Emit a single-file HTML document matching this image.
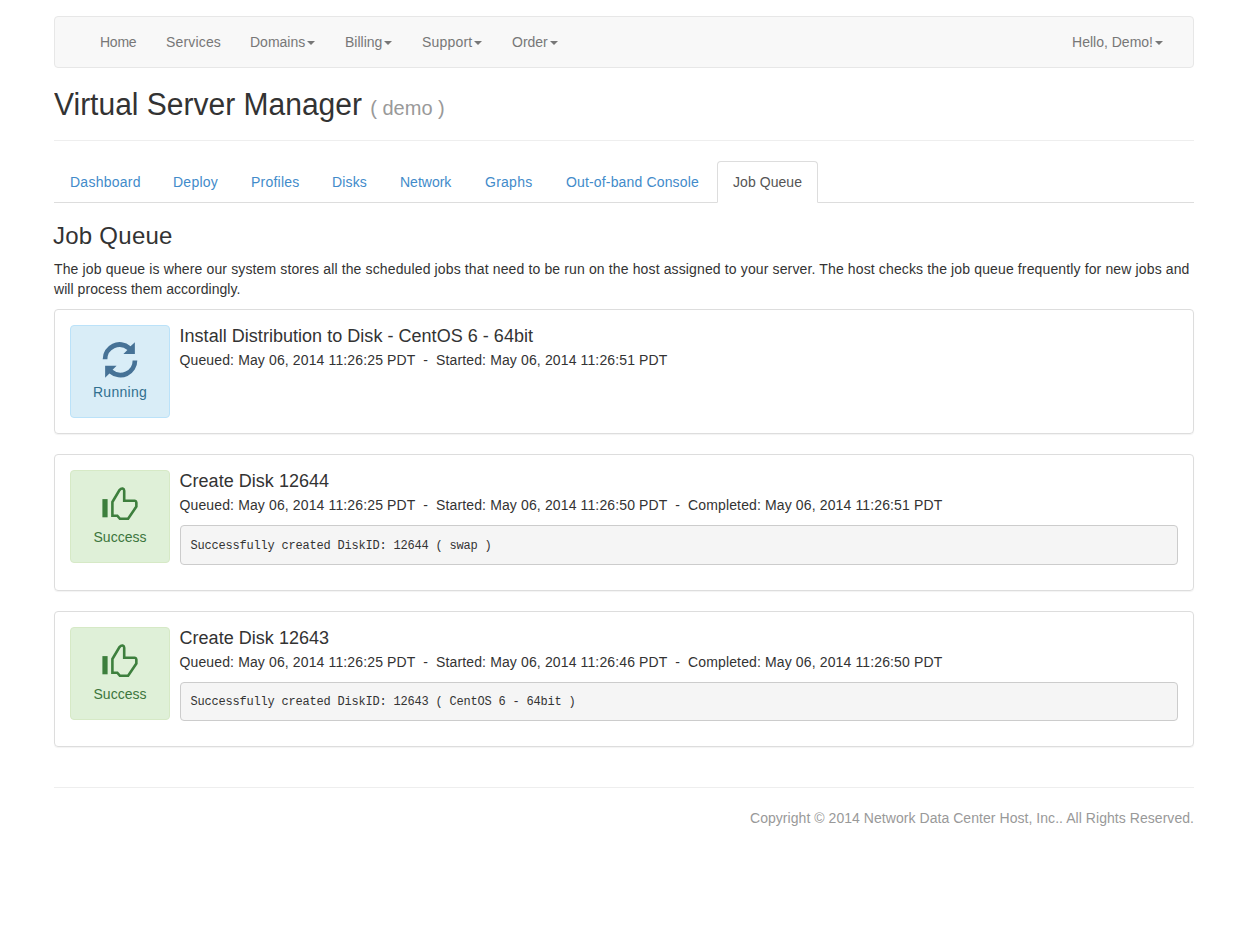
<!DOCTYPE html>
<html><head><meta charset="utf-8"><title>Virtual Server Manager</title>
<style>
*{box-sizing:border-box;}
html,body{margin:0;padding:0;background:#fff;}
body{font-family:"Liberation Sans",sans-serif;font-size:14px;line-height:20px;color:#333;width:1257px;height:933px;overflow:hidden;position:relative;}
.container{position:absolute;left:54px;top:0;width:1140px;}
.navbar{margin-top:16px;height:52px;background:#f8f8f8;border:1px solid #e7e7e7;border-radius:4px;position:relative;}
.nav a{position:absolute;top:15px;line-height:20px;color:#777;text-decoration:none;white-space:nowrap;}
.navr{position:absolute;top:0;right:15px;}
.navr a{display:block;padding:15px;line-height:20px;color:#777;}
.caret{display:inline-block;width:0;height:0;margin-left:2px;vertical-align:middle;border-top:4px solid #777;border-left:4px solid transparent;border-right:4px solid transparent;position:relative;top:0px;}
.page-header{margin:20px 0 20px;padding-bottom:9px;border-bottom:1px solid #eee;}
h1{font-size:30px;font-weight:500;line-height:33px;margin:0 0 10px;color:#333;}
.t1{display:inline-block;transform:scaleY(1.055);transform-origin:0 27px;}
h1 small{font-size:20px;color:#999;font-weight:normal;line-height:1;}
.tabs{height:42px;border-bottom:1px solid #ddd;position:relative;margin:0;padding:0;list-style:none;}
.tabs li{float:left;margin-right:2px;margin-bottom:-1px;}
.tabs a{display:block;padding:10px 0 10px 15px;white-space:nowrap;line-height:20px;border:1px solid transparent;border-radius:4px 4px 0 0;color:#428bca;text-decoration:none;}
.tabs li.active a{color:#555;background:#fff;border-color:#ddd #ddd transparent;}
h3{font-size:24px;font-weight:500;line-height:26.4px;margin:20px 0 10px;letter-spacing:0.25px;position:relative;left:-1px;}
p{margin:0 0 10px;}
.intro{white-space:nowrap;letter-spacing:0.133px;}
.intro span{letter-spacing:0.05px;}
.meta{letter-spacing:0.13px;white-space:nowrap;position:relative;left:-0.5px;}
.panel{border:1px solid #ddd;border-radius:4px;margin-bottom:20px;box-shadow:0 1px 1px rgba(0,0,0,.05);position:relative;}
.pbody{padding:15px;position:relative;}
.status{position:absolute;left:15px;top:15px;width:100px;height:93px;border:1px solid;border-radius:4px;text-align:center;}
.info{background:#d9edf7;border-color:#bbe2f9;color:#31708f;}
.succ{background:#dff0d8;border-color:#d6e9c6;color:#3c763d;}
.status svg{position:absolute;left:0;top:0;}
.status span{position:absolute;left:0;right:0;top:56px;line-height:20px;}
.info span{letter-spacing:0.28px;}
.job{margin-left:110px;}
h4{font-size:18px;font-weight:500;line-height:19.8px;margin:2px 0 3px;position:relative;left:-0.5px;letter-spacing:0.03px;}
.job p{margin:0 0 10px;}
pre{margin:0 0 10px;padding:10.5px 9.5px 8.5px;letter-spacing:-0.2px;font-family:"Liberation Mono",monospace;font-size:12px;line-height:18.57px;background:#f5f5f5;border:1px solid #ccc;border-radius:4px;color:#333;}
.minh{min-height:91px;}
hr{margin:40px 0 20px;border:0;border-top:1px solid #eee;height:0;}
.footer{text-align:right;color:#999;letter-spacing:0.05px;margin-right:-0.05px;}
</style></head><body>
<div class="container">
<div class="navbar">
 <div class="nav"><a style="left:45px;letter-spacing:-0.25px">Home</a><a style="left:111px;letter-spacing:0.17px">Services</a><a style="left:195px">Domains<span class="caret"></span></a><a style="left:290px">Billing<span class="caret"></span></a><a style="left:367px;letter-spacing:0.2px">Support<span class="caret"></span></a><a style="left:457px">Order<span class="caret"></span></a></div>
 <div class="navr"><a>Hello, Demo!<span class="caret"></span></a></div>
</div>
<div class="page-header"><h1><span class="t1">Virtual Server Manager</span> <small>( demo )</small></h1></div>
<ul class="tabs">
 <li><a style="width:101px;letter-spacing:0.25px">Dashboard</a></li><li><a style="width:76px;letter-spacing:0.24px">Deploy</a></li><li><a style="width:79px;letter-spacing:0.23px">Profiles</a></li><li><a style="width:66px;letter-spacing:0.15px">Disks</a></li><li><a style="width:83px">Network</a></li><li><a style="width:79px;letter-spacing:0.26px">Graphs</a></li><li><a style="width:165px;letter-spacing:0.155px">Out-of-band Console</a></li><li class="active"><a style="width:101px;letter-spacing:0.06px">Job Queue</a></li>
</ul>
<h3>Job Queue</h3>
<p class="intro">The job queue is where our system stores all the scheduled jobs that need to be run on the host assigned to your server. The host checks the job queue frequently for new jobs and<br><span>will process them accordingly.</span></p>

<div class="panel"><div class="pbody">
 <div class="status info">
  <svg width="100" height="93" viewBox="71 325.6 100 93"><path fill="#467296" d="M102.7 358.86A16.88 16.88 0 0 1 130.57 345.8L134.87 341.8L134.87 353.6L123.4 353.6L127.4 349.5A12.2 12.2 0 0 0 107.38 358.86Z M137.3 359.98A16.88 16.88 0 0 1 109.43 373.04L105.13 377.4L105.13 365.24L116.6 365.24L112.6 369.34A12.2 12.2 0 0 0 132.62 359.98Z"/></svg>
  <span>Running</span>
 </div>
 <div class="job minh">
  <h4>Install Distribution to Disk - CentOS 6 - 64bit</h4>
  <p class="meta">Queued: May 06, 2014 11:26:25 PDT &nbsp;-&nbsp; Started: May 06, 2014 11:26:51 PDT</p>
 </div>
</div></div>

<div class="panel"><div class="pbody">
 <div class="status succ">
  <svg width="100" height="93" viewBox="71 470.6 100 93"><rect x="102.4" y="498.7" width="5.2" height="18.2" fill="#3d7f3d"/><path fill="none" stroke="#3d7f3d" stroke-width="2.6" stroke-linejoin="miter" d="M112.4 501.6L119.5 489.7Q121 487.9 122.7 488.2Q124.2 488.6 124.2 490.4L124.2 500.3L134.9 500.3Q136.35 500.5 136.35 502L136.35 506.2L128.1 518.4L119.9 518.4L117.3 515.3L112.4 515.3Z"/></svg>
  <span>Success</span>
 </div>
 <div class="job">
  <h4>Create Disk 12644</h4>
  <p class="meta">Queued: May 06, 2014 11:26:25 PDT &nbsp;-&nbsp; Started: May 06, 2014 11:26:50 PDT &nbsp;-&nbsp; Completed: May 06, 2014 11:26:51 PDT</p>
  <pre>Successfully created DiskID: 12644 ( swap )</pre>
 </div>
</div></div>

<div class="panel"><div class="pbody">
 <div class="status succ">
  <svg width="100" height="93" viewBox="71 470.6 100 93"><rect x="102.4" y="498.7" width="5.2" height="18.2" fill="#3d7f3d"/><path fill="none" stroke="#3d7f3d" stroke-width="2.6" stroke-linejoin="miter" d="M112.4 501.6L119.5 489.7Q121 487.9 122.7 488.2Q124.2 488.6 124.2 490.4L124.2 500.3L134.9 500.3Q136.35 500.5 136.35 502L136.35 506.2L128.1 518.4L119.9 518.4L117.3 515.3L112.4 515.3Z"/></svg>
  <span>Success</span>
 </div>
 <div class="job">
  <h4>Create Disk 12643</h4>
  <p class="meta">Queued: May 06, 2014 11:26:25 PDT &nbsp;-&nbsp; Started: May 06, 2014 11:26:46 PDT &nbsp;-&nbsp; Completed: May 06, 2014 11:26:50 PDT</p>
  <pre>Successfully created DiskID: 12643 ( CentOS 6 - 64bit )</pre>
 </div>
</div></div>

<hr>
<div class="footer">Copyright © 2014 Network Data Center Host, Inc.. All Rights Reserved.</div>
</div>
</body></html>
